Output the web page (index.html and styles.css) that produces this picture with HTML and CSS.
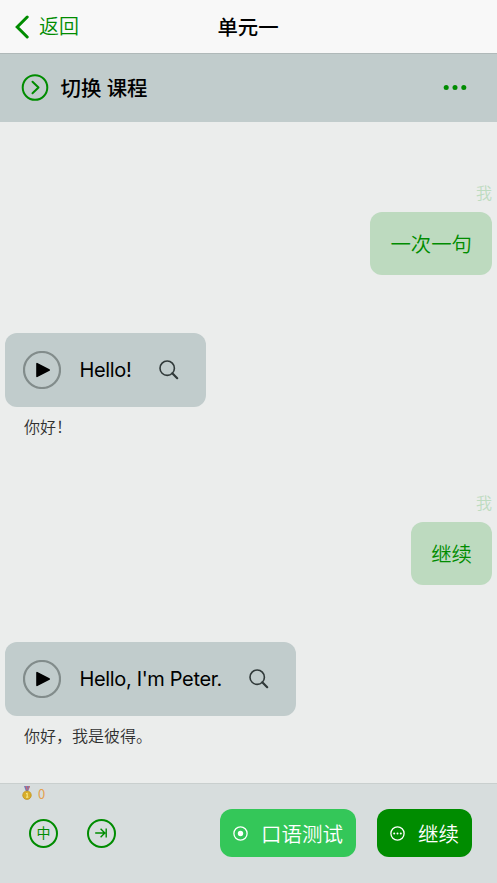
FILE: index.html
```html
<!DOCTYPE html>
<html lang="zh-CN">
<head>
<meta charset="utf-8">
<title>单元一</title>
<link rel="stylesheet" href="styles.css">
</head>
<body>
<div class="app">
  <header class="navbar">
    <a class="back">
      <svg width="14" height="24" viewBox="0 0 14 24"><path d="M12.2 2L2.2 12l10 10" fill="none" stroke="currentColor" stroke-width="3" stroke-linecap="round"/></svg>
      <span>返回</span>
    </a>
    <h1 class="title">单元一</h1>
  </header>
  <div class="lesson-bar">
    <svg width="28" height="28" viewBox="0 0 28 28" fill="none" stroke="currentColor"><circle cx="14" cy="13.5" r="12.3" stroke-width="2"/><path d="M11.5 7.7l6 5.8-6 5.8" stroke-width="2" stroke-linecap="round" stroke-linejoin="round"/></svg>
    <h2 class="lesson-title">切换 课程</h2>
    <svg class="more" width="24" height="6" viewBox="0 0 24 6" fill="currentColor"><circle cx="3.2" cy="2.6" r="2.5"/><circle cx="12" cy="2.6" r="2.5"/><circle cx="20.8" cy="2.6" r="2.5"/></svg>
  </div>
  <main class="chat">
    <section class="mine">
      <div class="sender">我</div>
      <div class="reply">一次一句</div>
    </section>
    <section class="lesson">
      <div class="card">
        <svg class="play" width="38" height="38" viewBox="0 0 38 38"><circle cx="19" cy="19" r="18" fill="none" stroke="#828c8b" stroke-width="2.2"/><path d="M14 12.6v12.8L26.2 19z" stroke="#000" stroke-width="1.6" stroke-linejoin="round"/></svg>
        <span class="phrase">Hello!</span>
        <svg class="search" width="20" height="20" viewBox="0 0 20 20" fill="none" stroke="#303939"><circle cx="8.2" cy="8.2" r="7.2" stroke-width="1.6"/><path d="M13.3 13.3l4.9 4.9" stroke-width="2.2" stroke-linecap="round"/></svg>
      </div>
      <p class="translation">你好！</p>
    </section>
    <section class="mine">
      <div class="sender">我</div>
      <div class="reply">继续</div>
    </section>
    <section class="lesson">
      <div class="card card-long">
        <svg class="play" width="38" height="38" viewBox="0 0 38 38"><circle cx="19" cy="19" r="18" fill="none" stroke="#828c8b" stroke-width="2.2"/><path d="M14 12.6v12.8L26.2 19z" stroke="#000" stroke-width="1.6" stroke-linejoin="round"/></svg>
        <span class="phrase">Hello, I'm Peter.</span>
        <svg class="search" width="20" height="20" viewBox="0 0 20 20" fill="none" stroke="#303939"><circle cx="8.2" cy="8.2" r="7.2" stroke-width="1.6"/><path d="M13.3 13.3l4.9 4.9" stroke-width="2.2" stroke-linecap="round"/></svg>
      </div>
      <p class="translation">你好，我是彼得。</p>
    </section>
  </main>
  <footer class="footer">
    <div class="score">
      <svg width="10" height="14" viewBox="0 0 10 14"><path d="M2 0h6L6.2 5H3.8z" fill="#6f7cb8"/><path d="M3.5 0h1.2l1 4H4.6z" fill="#d8686d"/><path d="M6.6 0H8L6.4 4.5z" fill="#d8686d"/><circle cx="5" cy="9.2" r="4.3" fill="#d8ad29" stroke="#b98a15" stroke-width=".6"/><path d="M4 8l1.2-.9V11M4 11.2h2.4" fill="none" stroke="#fbec87" stroke-width="1"/></svg>
      <span>0</span>
    </div>
    <div class="actions">
      <span class="round">中</span>
      <span class="round"><svg width="14" height="12" viewBox="0 0 14 12" fill="none" stroke="currentColor" stroke-width="1.4"><path d="M1.2 6h9.5M6.6 1.8L10.8 6l-4.2 4.2M12.2 1.5v9"/></svg></span>
      <button class="btn speak"><svg width="15" height="15" viewBox="0 0 15 15"><circle cx="7.5" cy="7.5" r="6.6" fill="none" stroke="#fff" stroke-width="1.3"/><circle cx="7.5" cy="7.5" r="2.7" fill="#fff"/></svg><span>口语测试</span></button>
      <button class="btn next"><svg width="15" height="15" viewBox="0 0 15 15" fill="#fff"><circle cx="7.5" cy="7.5" r="6.6" fill="none" stroke="#fff" stroke-width="1.3"/><circle cx="4.2" cy="7.5" r="1"/><circle cx="7.5" cy="7.5" r="1"/><circle cx="10.8" cy="7.5" r="1"/></svg><span>继续</span></button>
    </div>
  </footer>
</div>
</body>
</html>
```

FILE: styles.css
```css
* { box-sizing: border-box; }
body {
  margin: 0;
  font-family: Inter, "Noto Sans CJK SC", sans-serif;
  background: #ebedec;
}
svg { display: block; flex: none; }
.app {
  display: flex;
  flex-direction: column;
  width: 497px;
  height: 883px;
  overflow: hidden;
}
.navbar {
  flex: none;
  display: grid;
  grid-template-columns: 1fr auto 1fr;
  align-items: center;
  height: 54px;
  padding: 0 16px 0 15px;
  background: #f8f8f8;
  border-bottom: 1px solid #b0b9b9;
}
.back {
  display: flex;
  align-items: center;
  gap: 10px;
  color: #008c00;
  font-size: 20px;
  font-weight: 350;
  line-height: 30px;
}
.title, .lesson-title {
  margin: 0;
  padding-top: 2px;
  font-size: 20.4px;
  font-weight: 500;
  line-height: 30px;
  color: #000;
}
.lesson-bar {
  flex: none;
  display: flex;
  align-items: center;
  height: 68px;
  padding: 0 30px 0 21px;
  background: #c1cccc;
  color: #008c00;
}
.lesson-title { margin-left: 11.5px; }
.more { margin-left: auto; }
.chat {
  display: flex;
  flex-direction: column;
  flex: 1;
  min-height: 0;
  padding: 59px 5px 0;
}
.mine {
  flex: none;
  display: flex;
  flex-direction: column;
  align-items: flex-end;
  height: 152px;
}
.sender {
  height: 31px;
  font-size: 16px;
  font-weight: 350;
  line-height: 24px;
  color: #bddbc0;
}
.reply {
  height: 63px;
  padding: 1px 20px 0;
  border-radius: 12px;
  background: #bddabf;
  color: #008c00;
  font-size: 20.4px;
  font-weight: 350;
  line-height: 63px;
}
.lesson {
  flex: none;
  height: 158px;
}
.lesson:last-child { margin-top: -0.6px; }
.card {
  display: flex;
  align-items: center;
  width: 201.4px;
  height: 74px;
  padding: 0 27px 0 18px;
  border-radius: 12px;
  background: #c1cccc;
}
.card-long { width: 291.4px; }
.phrase {
  margin-left: 18.5px;
  color: #000;
  font-size: 20px;
  line-height: 30px;
  letter-spacing: -0.35px;
  white-space: nowrap;
}
.search { margin-left: auto; }
.translation {
  margin: 8px 0 0 19px;
  color: #303030;
  font-size: 16px;
  font-weight: 350;
  line-height: 24px;
}
.footer {
  flex: none;
  height: 100px;
  padding-left: 22px;
  background: #d7dddd;
  border-top: 1px solid #c9cfce;
}
.score {
  display: flex;
  align-items: center;
  gap: 6px;
  height: 18px;
  color: #e4a04d;
  font-family: "Noto Sans CJK SC", sans-serif;
  font-size: 13px;
}
.actions {
  display: flex;
  align-items: center;
  height: 48px;
  margin-top: 7px;
  padding-left: 7px;
}
.round {
  display: flex;
  align-items: center;
  justify-content: center;
  width: 29px;
  height: 29px;
  margin-right: 28.5px;
  border: 2px solid #008c00;
  border-radius: 50%;
  color: #008c00;
  font-size: 14px;
  line-height: 20px;
}
.btn {
  display: flex;
  align-items: center;
  height: 48px;
  padding: 0 0 0 13px;
  border: 0;
  border-radius: 12px;
  color: #fff;
  font: 350 20.5px/30px "Noto Sans CJK SC", sans-serif;
}
.btn span { margin-left: 13px; white-space: nowrap; }
.speak { width: 136px; margin-left: 76px; background: #34c759; }
.next { width: 95px; margin-left: 21px; background: #008c00; }
```
